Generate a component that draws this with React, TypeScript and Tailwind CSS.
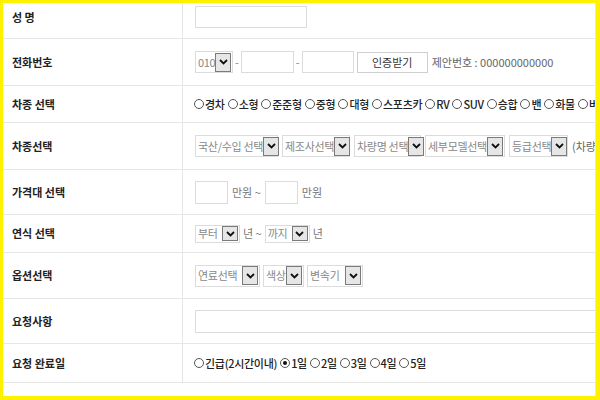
import React from "react";

const FONT = { fontFamily: '"Noto Sans CJK KR", "Noto Sans", sans-serif' };

function Arrow({ h }: { h: number }) {
  return (
    <span
      className="flex items-center justify-center border border-[#7a7a7a] bg-[#e6e6e6] w-[16px] shrink-0"
      style={{ height: h }}
    >
      <svg width="9" height="6" viewBox="0 0 9 6">
        <path d="M1 1 L4.5 4.5 L8 1" fill="none" stroke="#111" strokeWidth="1.8" />
      </svg>
    </span>
  );
}

function Sel({ w, label, h = 22 }: { w: number; label: string; h?: number }) {
  return (
    <span
      className="flex items-center justify-between border border-[#dcdcdc] bg-white pl-[2px] pr-[1px] shrink-0 text-[#888] text-[11px] tracking-[-0.3px]"
      style={{ width: w, height: h }}
    >
      <span className="whitespace-nowrap leading-none">{label}</span>
      <Arrow h={h - 3} />
    </span>
  );
}

function Box({ w, h = 22 }: { w: number; h?: number }) {
  return <span className="block border border-[#dcdcdc] bg-white shrink-0" style={{ width: w, height: h }} />;
}

function Radio({ label, checked = false }: { label: string; checked?: boolean }) {
  return (
    <span className="flex items-center shrink-0 whitespace-nowrap mr-[3px]">
      <span className="flex items-center justify-center w-[10px] h-[10px] rounded-full border border-[#555] bg-white mr-[1px]">
        {checked && <span className="block w-[4px] h-[4px] rounded-full bg-[#111]" />}
      </span>
      <span className="text-[#222] text-[11px] font-medium tracking-[-0.3px]">{label}</span>
    </span>
  );
}

function Row({ label, h, children, top = false }: { label: string; h: number; children: React.ReactNode; top?: boolean }) {
  return (
    <div className="flex border-b border-[#e6e6e6] shrink-0" style={{ height: h }}>
      <div className={`w-[180px] shrink-0 border-r border-[#e6e6e6] pl-[9px] flex ${top ? "items-start" : "items-center"}`}>
        <span className={`font-bold text-[11px] text-[#222] ${top ? "mt-[6px]" : ""}`}>{label}</span>
      </div>
      <div className={`flex-1 pl-[12px] flex ${top ? "items-start pt-[3px]" : "items-center"} min-w-0 overflow-hidden`}>
        {children}
      </div>
    </div>
  );
}

export default function App() {
  return (
    <div
      className="w-[600px] h-[400px] box-border border-t-[3px] border-l-[3px] border-r-[4px] border-b-[4px] border-[#fff200] bg-white overflow-hidden"
      style={FONT}
    >
      <div className="h-full flex flex-col border-r border-[#e6e6e6] overflow-hidden">
        <Row label="성 명" h={36} top>
          <Box w={112} h={22} />
        </Row>
        <Row label="전화번호" h={47}>
          <div className="flex items-center">
            <Sel w={38} label="010" />
            <span className="text-[#888] text-[11px] mx-[2px]">-</span>
            <Box w={53} />
            <span className="text-[#888] text-[11px] mx-[2px]">-</span>
            <Box w={52} />
            <span className="ml-[3px] flex items-center justify-center w-[71px] h-[21px] border border-[#cfcfcf] bg-white text-[11px] text-[#333] shrink-0">
              인증받기
            </span>
            <span className="ml-[4px] text-[11px] text-[#666] whitespace-nowrap">제안번호 : 000000000000</span>
          </div>
        </Row>
        <Row label="차종 선택" h={37}>
          <div className="flex items-center -ml-[1px]">
            <Radio label="경차" />
            <Radio label="소형" />
            <Radio label="준준형" />
            <Radio label="중형" />
            <Radio label="대형" />
            <Radio label="스포츠카" />
            <Radio label="RV" />
            <Radio label="SUV" />
            <Radio label="승합" />
            <Radio label="밴" />
            <Radio label="화물" />
            <Radio label="버스" />
          </div>
        </Row>
        <Row label="차종선택" h={47}>
          <div className="flex items-center gap-[4px]">
            <Sel w={83} label="국산/수입 선택" />
            <Sel w={68} label="제조사선택" />
            <Sel w={67} label="차량명 선택" />
            <Sel w={80} label="세부모델선택" />
            <Sel w={59} label="등급선택" />
            <span className="text-[11px] text-[#666] whitespace-nowrap">(차량리스트)</span>
          </div>
        </Row>
        <Row label="가격대 선택" h={45}>
          <div className="flex items-center">
            <Box w={33} h={23} />
            <span className="ml-[4px] text-[11px] text-[#777] whitespace-nowrap">만원 ~</span>
            <span className="ml-[4px]"><Box w={33} h={23} /></span>
            <span className="ml-[4px] text-[11px] text-[#777]">만원</span>
          </div>
        </Row>
        <Row label="연식 선택" h={38}>
          <div className="flex items-center">
            <Sel w={45} label="부터" h={18} />
            <span className="ml-[3px] text-[11px] text-[#777] whitespace-nowrap">년 ~</span>
            <span className="ml-[3px]"><Sel w={45} label="까지" h={18} /></span>
            <span className="ml-[3px] text-[11px] text-[#777]">년</span>
          </div>
        </Row>
        <Row label="옵션선택" h={46}>
          <div className="flex items-center gap-[3px]">
            <Sel w={65} label="연료선택" />
            <Sel w={41} label="색상" />
            <Sel w={56} label="변속기" />
          </div>
        </Row>
        <Row label="요청사항" h={45}>
          <span className="block border border-[#dcdcdc] bg-white h-[23px] w-[420px] shrink-0" />
        </Row>
        <Row label="요청 완료일" h={39}>
          <div className="flex items-center -ml-[1px]">
            <Radio label="긴급(2시간이내)" />
            <Radio label="1일" checked />
            <Radio label="2일" />
            <Radio label="3일" />
            <Radio label="4일" />
            <Radio label="5일" />
          </div>
        </Row>
      </div>
    </div>
  );
}
